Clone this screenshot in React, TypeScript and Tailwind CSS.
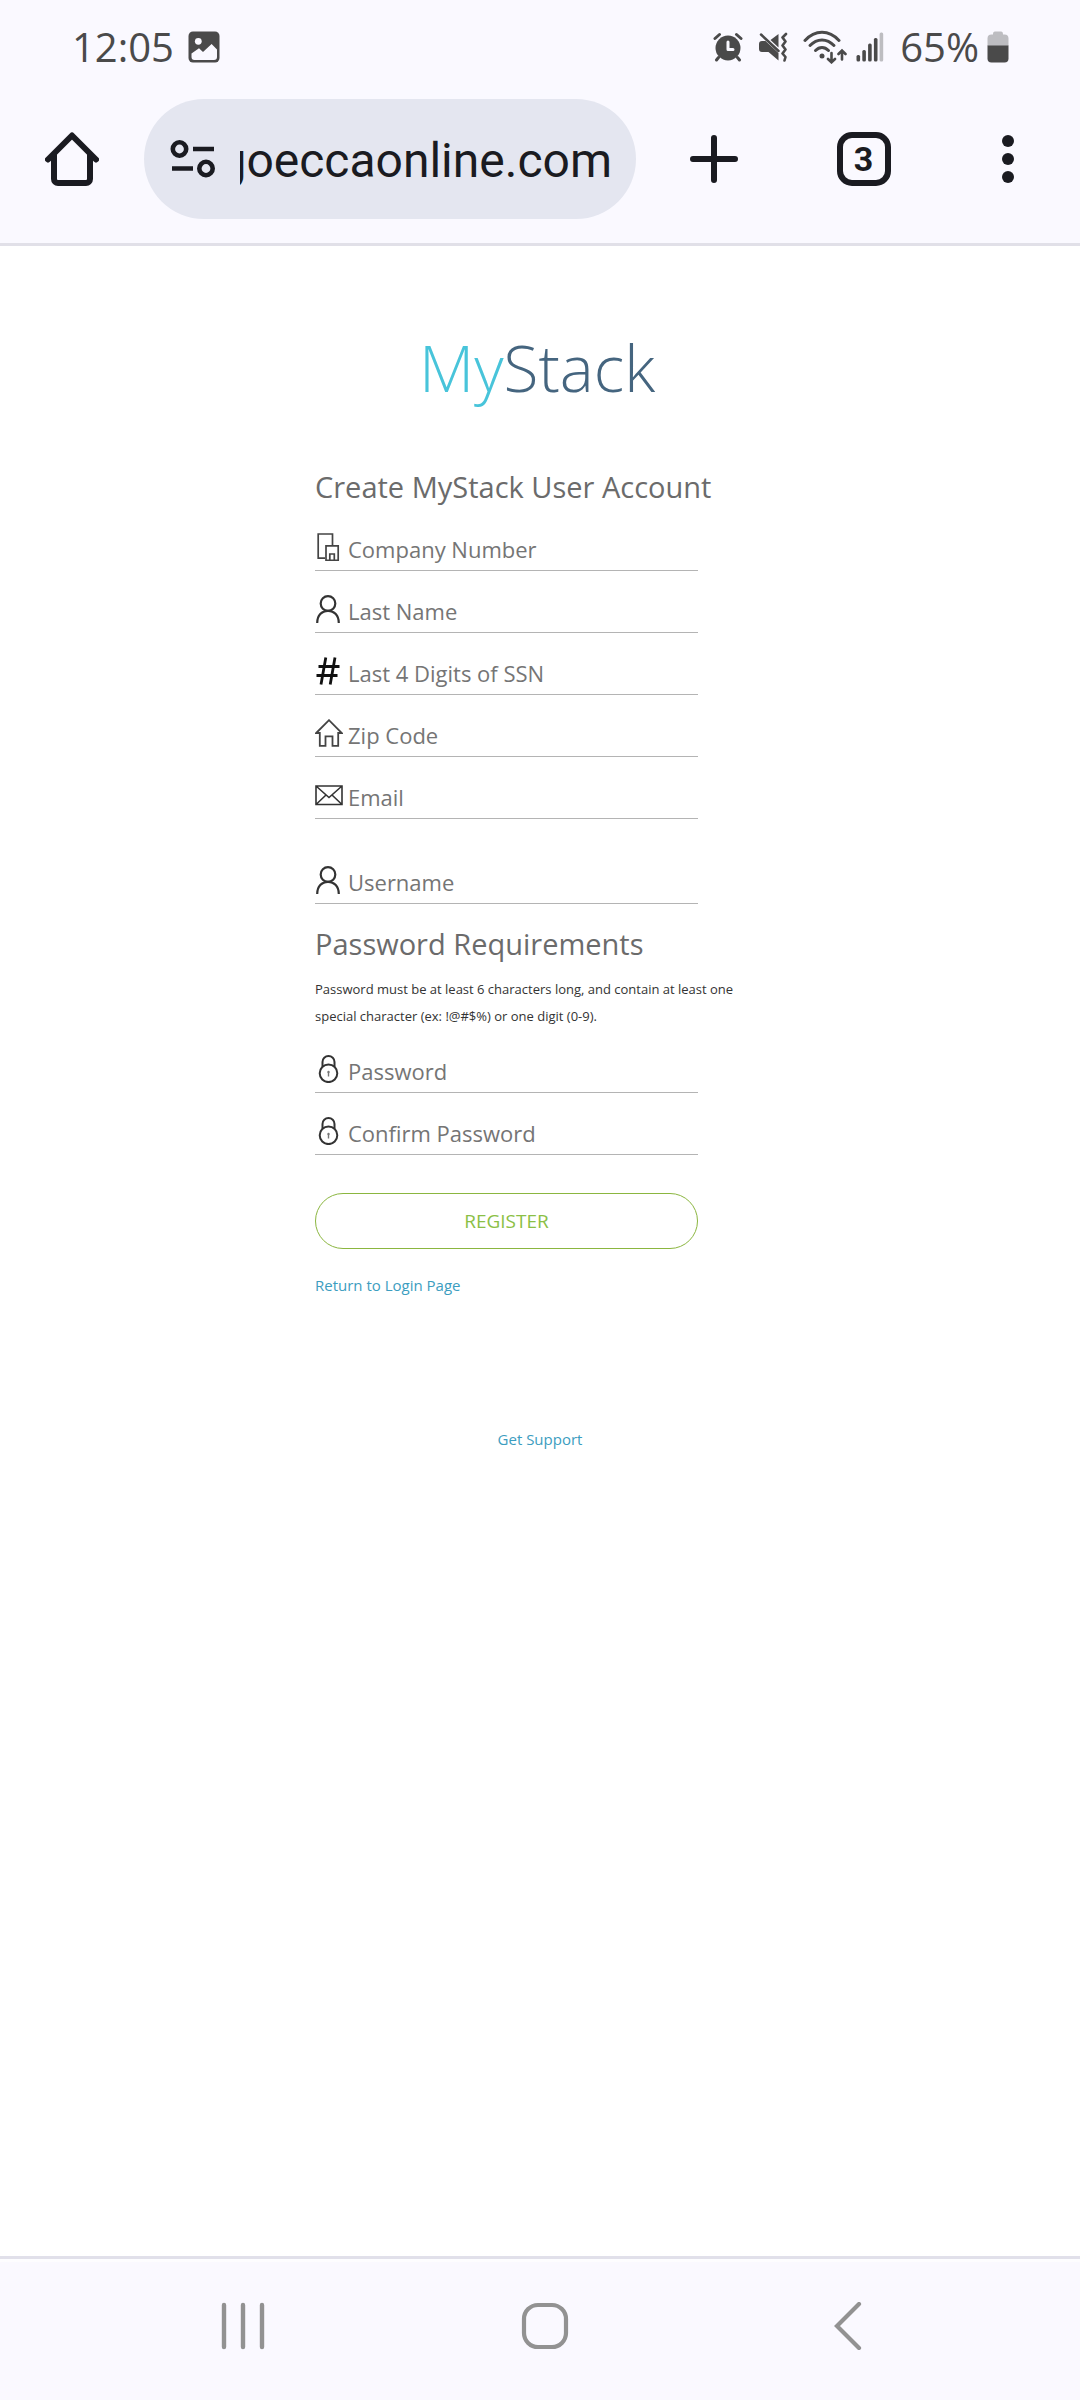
import React from "react";

type IconProps = { className?: string };

const ImageIcon = () => (
  <svg viewBox="0 0 32 32" className="size-8" aria-hidden="true">
    <rect x="0.5" y="0.5" width="31" height="31" rx="4.5" fill="#4a4a4a" />
    <circle cx="10.3" cy="10.3" r="3.4" fill="#faf9ff" />
    <path
      d="M3.5 22.5 11 17.2l4 3.9 8.6-8.1 5.4 5.6v7.4a3 3 0 0 1-3 3H6.5a3 3 0 0 1-3-3z"
      fill="#faf9ff"
    />
  </svg>
);

const AlarmIcon = () => (
  <svg viewBox="0 0 30 30" className="size-[30px]" aria-hidden="true">
    <circle cx="15" cy="16" r="12.5" fill="#4a4a4a" />
    <path
      d="M2 6.5 6.5 2.5M28 6.5 23.5 2.5M5.5 25.5 3.5 28M24.5 25.5l2 2.5"
      stroke="#4a4a4a"
      strokeWidth="3"
      strokeLinecap="round"
    />
    <path
      d="M15 10v7.5h5"
      fill="none"
      stroke="#faf9ff"
      strokeWidth="3"
      strokeLinejoin="round"
      strokeLinecap="round"
    />
  </svg>
);

const VibrateIcon = () => (
  <svg viewBox="0 0 30 30" className="size-[30px]" aria-hidden="true">
    <path
      d="M4 9h3.5l13 12v7.5l-10-8.5H4a3 3 0 0 1-3-3v-5a3 3 0 0 1 3-3zM20.5 2v13.5L12.5 8z"
      fill="#4a4a4a"
    />
    <path d="M3 2.5 20.5 19" stroke="#4a4a4a" strokeWidth="2.5" strokeLinecap="round" />
    <path
      d="M28 2l-3.5 3.5 3 4-3 4 3 4-3 4 3 3.5-1 3.5"
      fill="none"
      stroke="#4a4a4a"
      strokeWidth="2.6"
      strokeLinecap="round"
      strokeLinejoin="round"
    />
  </svg>
);

const WifiIcon = () => (
  <svg viewBox="0 0 44 34" className="h-[34px] w-11" aria-hidden="true">
    <g fill="none" stroke="#4a4a4a" strokeWidth="3" strokeLinecap="round">
      <path d="M2 10.5C12 -.5 26 -.5 36 10.5" />
      <path d="M7 15.5c7-7.5 17-7.5 24 0" />
      <path d="M12.5 20.5c4-4 9-4 13 0" />
      <path d="M28.5 23v9M25 29l3.5 3.3L32 29" strokeWidth="2.6" />
      <path d="M39 29.5v-9M35.5 24l3.5-3.5 3.5 3.5" strokeWidth="2.6" />
    </g>
    <circle cx="19" cy="26" r="2.5" fill="#4a4a4a" />
  </svg>
);

const SignalIcon = () => (
  <svg viewBox="0 0 28 30" className="h-[30px] w-7" aria-hidden="true">
    <g fill="#4a4a4a">
      <rect x="0.5" y="23" width="3.6" height="6.5" rx="1.5" />
      <rect x="6.3" y="18" width="3.6" height="11.5" rx="1.5" />
      <rect x="12.1" y="11.5" width="3.6" height="18" rx="1.5" />
      <rect x="17.9" y="6" width="3.6" height="23.5" rx="1.5" />
    </g>
    <rect x="23.6" y="0.5" width="3.6" height="29" rx="1.5" fill="#bdbdc1" />
  </svg>
);

const BatteryIcon = () => (
  <svg viewBox="0 0 22 32" className="h-8 w-[22px]" aria-hidden="true">
    <path
      d="M6 3.5C6 1.5 6.5.5 8 .5h6c1.5 0 2 1 2 3h1.5a4 4 0 0 1 4 4V15H.5V7.5a4 4 0 0 1 4-4z"
      fill="#bdbdc1"
    />
    <path d="M.5 14.5h21v13a4 4 0 0 1-4 4h-13a4 4 0 0 1-4-4z" fill="#4a4a4a" />
  </svg>
);

const HomeIcon = () => (
  <svg viewBox="0 0 54 54" className="size-[54px]" aria-hidden="true">
    <path
      d="M3 27.5 27 3.5l24 24M9 22v25a4 4 0 0 0 4 4h28a4 4 0 0 0 4-4V22"
      fill="none"
      stroke="#1a1b21"
      strokeWidth="6"
      strokeLinecap="round"
      strokeLinejoin="round"
    />
  </svg>
);

const TuneIcon = () => (
  <svg viewBox="0 0 46 40" className="h-10 w-[46px]" aria-hidden="true">
    <g fill="none" stroke="#1a1b21" strokeWidth="4.6">
      <circle cx="9.5" cy="10" r="6.7" />
      <circle cx="36" cy="29.5" r="6.7" />
      <path d="M23 10h21M2 29.5h21" />
    </g>
  </svg>
);

const PlusIcon = () => (
  <svg viewBox="0 0 48 48" className="size-12" aria-hidden="true">
    <path d="M24 3v42M3 24h42" stroke="#1a1b21" strokeWidth="6" strokeLinecap="round" />
  </svg>
);

const DotsIcon = () => (
  <svg viewBox="0 0 12 48" className="h-12 w-3" aria-hidden="true" fill="#1a1b21">
    <circle cx="6" cy="6" r="6" />
    <circle cx="6" cy="24" r="6" />
    <circle cx="6" cy="42" r="6" />
  </svg>
);

const CompanyIcon = ({ className }: IconProps) => (
  <svg viewBox="0 0 28 28" className={className} fill="none" stroke="#444" strokeWidth="1.7">
    <path d="M10 25.2H3.2V1h14.3v11.5" />
    <path d="M11 12.8h12.2v14.5H11zM14.8 27v-6h4.5v6" />
  </svg>
);

const UserIcon = ({ className }: IconProps) => (
  <svg viewBox="0 0 28 28" className={className} fill="none" stroke="#333" strokeWidth="2.2">
    <circle cx="13" cy="8.5" r="7.3" />
    <path d="M2.2 28c0-7.5 4.5-12.2 10.8-12.2S23.8 20.5 23.8 28" />
  </svg>
);

const HashIcon = ({ className }: IconProps) => (
  <svg viewBox="0 0 28 28" className={className} fill="none" stroke="#111" strokeWidth="2.8">
    <path d="M10.8.5 6 27.500M20 .5l-4.8 27M3.5 9.5h21M1.5 18.5h21" />
  </svg>
);

const ZipIcon = ({ className }: IconProps) => (
  <svg viewBox="0 0 28 28" className={className} fill="none" stroke="#444" strokeWidth="1.8">
    <path d="M1.2 14 14 1.2 26.8 14h-3.6v12.8h-5.7v-9.5h-7v9.5H4.8V14z" />
  </svg>
);

const MailIcon = ({ className }: IconProps) => (
  <svg viewBox="0 0 28 28" className={className} fill="none" stroke="#333" strokeWidth="1.6">
    <path d="M1 5h26v18.5H1zM1 5l13 11.5L27 5M1 23.5 11 14M27 23.5 17 14" />
  </svg>
);

const LockIcon = ({ className }: IconProps) => (
  <svg viewBox="0 0 28 28" className={className} fill="none" stroke="#333" strokeWidth="2">
    <circle cx="13.5" cy="18.3" r="8.8" />
    <path d="M7.5 11.5V7a6 6 0 0 1 12 0v4.5" />
    <circle cx="13.5" cy="17" r="1.2" fill="#777" stroke="none" />
    <path d="M13.5 17v4.5" stroke="#777" strokeWidth="1.4" />
  </svg>
);

type FieldProps = {
  id: string;
  label: string;
  type?: string;
  icon: React.FC<IconProps>;
};

const Field: React.FC<FieldProps> = ({ id, label, type = "text", icon: Icon }) => (
  <div className="flex h-[38px] items-start border-b border-[#b4b4b4]">
    <label htmlFor={id} aria-label={label} className="shrink-0">
      <Icon className="size-7" />
    </label>
    <input
      id={id}
      type={type}
      placeholder={label}
      className="h-8 w-full min-w-0 bg-transparent pl-[5px] text-[22px] text-[#555] outline-none placeholder:text-[#757575]"
    />
  </div>
);

const accountFields: FieldProps[] = [
  { id: "company", label: "Company Number", icon: CompanyIcon },
  { id: "lastName", label: "Last Name", icon: UserIcon },
  { id: "ssn", label: "Last 4 Digits of SSN", icon: HashIcon },
  { id: "zip", label: "Zip Code", icon: ZipIcon },
  { id: "email", label: "Email", type: "email", icon: MailIcon },
];

const StatusBar = () => (
  <div className="flex h-[93px] items-center justify-between pr-[71px] pl-[72px] font-['Open_Sans',sans-serif] text-[40px] leading-none text-[#4a4a4a]">
    <div className="flex items-center gap-3.5">
      <span>12:05</span>
      <ImageIcon />
    </div>
    <div className="flex items-center">
      <div className="mr-[9px] flex items-center gap-[15px]">
        <AlarmIcon />
        <VibrateIcon />
        <WifiIcon />
      </div>
      <SignalIcon />
      <span className="mr-2 ml-4">65%</span>
      <BatteryIcon />
    </div>
  </div>
);

const Toolbar = () => (
  <div className="flex items-center pt-1.5 pb-6">
    <button type="button" aria-label="Home" className="flex w-36 justify-center">
      <HomeIcon />
    </button>
    <div className="flex h-[120px] min-w-0 flex-1 items-center rounded-full bg-[#e4e6f0] pr-6 pl-[26px]">
      <button type="button" aria-label="Site settings" className="shrink-0">
        <TuneIcon />
      </button>
      {/* long addresses keep their end in view */}
      <div className="ml-6 flex min-w-0 flex-1 justify-end overflow-hidden pt-1 text-[48px] text-[#1a1b21]">
        <span>goeccaonline.com</span>
      </div>
    </div>
    <div className="flex items-center px-1">
      <button type="button" aria-label="New tab" className="flex w-[147px] justify-center">
        <PlusIcon />
      </button>
      <button type="button" aria-label="Tabs" className="flex w-[153px] justify-center">
        <span className="flex size-[54px] items-center justify-center rounded-[15px] border-[6px] border-[#1a1b21] text-[34px] leading-none font-bold text-[#1a1b21]">
          3
        </span>
      </button>
      <button type="button" aria-label="More" className="flex w-[136px] justify-center">
        <DotsIcon />
      </button>
    </div>
  </div>
);

const RegisterForm = () => (
  <form className="mx-auto w-[450px]">
    <h1 className="text-[29px] leading-10 text-[#6b6b6b]">Create MyStack User Account</h1>
    <div className="mt-[26px] flex w-[383px] flex-col gap-6">
      {accountFields.map((field) => (
        <Field key={field.id} {...field} />
      ))}
    </div>
    <div className="mt-[47px] w-[383px]">
      <Field id="username" label="Username" icon={UserIcon} />
    </div>
    <h2 className="mt-5 text-[29px] leading-10 text-[#6b6b6b]">Password Requirements</h2>
    <p className="mt-3 text-[13px] leading-[27px] text-[#333]">
      Password must be at least 6 characters long, and contain at least one special character (ex:
      !@#$%) or one digit (0-9).
    </p>
    <div className="mt-[25px] flex w-[383px] flex-col gap-6">
      <Field id="password" label="Password" type="password" icon={LockIcon} />
      <Field id="confirm" label="Confirm Password" type="password" icon={LockIcon} />
      <button
        type="button"
        className="mt-3.5 h-14 rounded-full border border-[#8bb63f] text-[19px] text-[#8bbf45]"
      >
        REGISTER
      </button>
    </div>
    <a href="#login" className="mt-6 inline-block text-[15px] leading-6 text-[#3c9dc0]">
      Return to Login Page
    </a>
  </form>
);

const NavBar = () => (
  <nav className="flex h-[144px] items-center justify-center gap-[254px] border-t-[3px] border-[#e1e0ea] bg-[#faf9ff] pb-2 pl-2.5 shadow-[inset_0_3px_0_#fdfdff]">
    <button type="button" aria-label="Recent apps">
      <svg viewBox="0 0 48 48" className="size-12" stroke="#929292" strokeWidth="4.4" strokeLinecap="round">
        <path d="M5 3v42M24 3v42M43 3v42" />
      </svg>
    </button>
    <button type="button" aria-label="Home screen">
      <svg viewBox="0 0 48 48" className="size-12" fill="none" stroke="#929292" strokeWidth="4.2">
        <rect x="3" y="3" width="42" height="42" rx="14" />
      </svg>
    </button>
    <button type="button" aria-label="Back">
      <svg viewBox="0 0 48 48" className="size-12" fill="none" stroke="#929292" strokeWidth="4.2" strokeLinecap="round">
        <path d="M36 2 14 24l22 22" />
      </svg>
    </button>
  </nav>
);

const App: React.FC = () => (
  <div className="flex min-h-screen flex-col bg-white">
    <header className="border-b-[3px] border-[#e1e0e8] bg-[#faf9ff] font-['Roboto',sans-serif]">
      <StatusBar />
      <Toolbar />
    </header>
    <main className="flex-1 font-['Open_Sans',sans-serif]">
      <div className="mt-[78px] mb-[55px] pr-1.5 text-center text-[64px] leading-[88px] font-light text-[#45657f]">
        <span className="text-[#48c4da]">My</span>Stack
      </div>
      <RegisterForm />
      <p className="mt-[130px] text-center text-[15px] leading-6">
        <a href="#support" className="text-[#3c9dc0]">
          Get Support
        </a>
      </p>
    </main>
    <NavBar />
  </div>
);

export default App;
